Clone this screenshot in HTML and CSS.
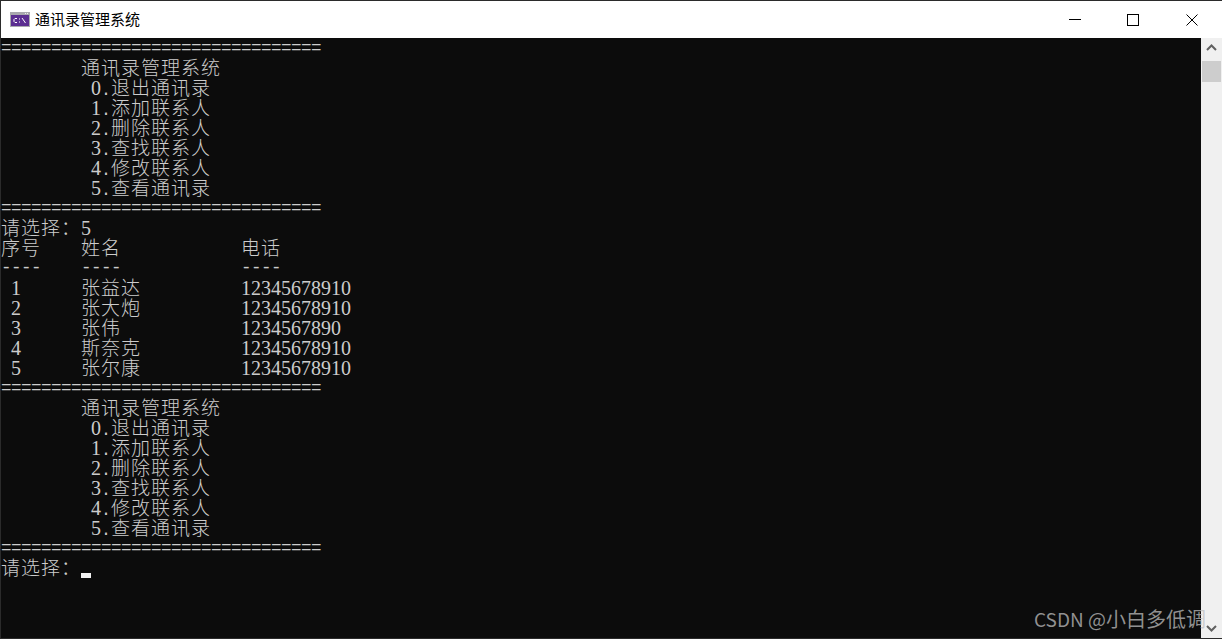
FILE: index.html
```html
<!DOCTYPE html>
<html lang="zh-CN">
<head>
<meta charset="utf-8">
<title>通讯录管理系统</title>
<link rel="stylesheet" href="styles.css">
</head>
<body>
<div class="window">
  <header class="titlebar">
    <svg class="app-icon" width="20" height="15" viewBox="0 0 20 15">
      <rect width="20" height="15" fill="#a9a9ae"/>
      <rect x="1" y="3" width="18" height="11" fill="#5b2e91"/>
      <rect x="15" y="1" width="1" height="1" fill="#eee"/><rect x="17" y="1" width="1" height="1" fill="#eee"/>
      <path d="M7 6.5H5L4 7.5V9.5L5 10.5H7" fill="none" stroke="#fff" stroke-width="1"/>
      <path d="M9 7h1M9 10h1" stroke="#fff" stroke-width="1"/>
      <path d="M12 6L15.5 11" stroke="#fff" stroke-width="1"/>
    </svg>
    <span class="title">通讯录管理系统</span>
    <div class="controls">
      <div class="ctl min"><svg width="12" height="12" viewBox="0 0 12 12"><path d="M0 5.5H12" stroke="#000" stroke-width="1"/></svg></div>
      <div class="ctl max"><svg width="12" height="12" viewBox="0 0 12 12"><rect x="0.5" y="0.5" width="11" height="11" fill="none" stroke="#000" stroke-width="1"/></svg></div>
      <div class="ctl close"><svg width="12" height="12" viewBox="0 0 12 12"><path d="M0.5 0.5L11.5 11.5M11.5 0.5L0.5 11.5" stroke="#000" stroke-width="1"/></svg></div>
    </div>
  </header>
  <main class="body">
    <div class="console">
      <div class="ln r">================================</div>
      <div class="ln">        <span class="c">通讯录管理系统</span></div>
      <div class="ln">         <span class="n">0</span>.<span class="c">退出通讯录</span></div>
      <div class="ln">         <span class="n">1</span>.<span class="c">添加联系人</span></div>
      <div class="ln">         <span class="n">2</span>.<span class="c">删除联系人</span></div>
      <div class="ln">         <span class="n">3</span>.<span class="c">查找联系人</span></div>
      <div class="ln">         <span class="n">4</span>.<span class="c">修改联系人</span></div>
      <div class="ln">         <span class="n">5</span>.<span class="c">查看通讯录</span></div>
      <div class="ln r">================================</div>
      <div class="ln"><span class="c">请选择：</span><span class="n">5</span></div>
      <div class="ln"><span class="c">序号</span>    <span class="c">姓名</span>            <span class="c">电话</span></div>
      <div class="ln r">----    ----            ----</div>
      <div class="ln"> <span class="n">1</span>      <span class="c">张益达</span>          <span class="n">12345678910</span></div>
      <div class="ln"> <span class="n">2</span>      <span class="c">张大炮</span>          <span class="n">12345678910</span></div>
      <div class="ln"> <span class="n">3</span>      <span class="c">张伟</span>            <span class="n">1234567890</span></div>
      <div class="ln"> <span class="n">4</span>      <span class="c">斯奈克</span>          <span class="n">12345678910</span></div>
      <div class="ln"> <span class="n">5</span>      <span class="c">张尔康</span>          <span class="n">12345678910</span></div>
      <div class="ln r">================================</div>
      <div class="ln">        <span class="c">通讯录管理系统</span></div>
      <div class="ln">         <span class="n">0</span>.<span class="c">退出通讯录</span></div>
      <div class="ln">         <span class="n">1</span>.<span class="c">添加联系人</span></div>
      <div class="ln">         <span class="n">2</span>.<span class="c">删除联系人</span></div>
      <div class="ln">         <span class="n">3</span>.<span class="c">查找联系人</span></div>
      <div class="ln">         <span class="n">4</span>.<span class="c">修改联系人</span></div>
      <div class="ln">         <span class="n">5</span>.<span class="c">查看通讯录</span></div>
      <div class="ln r">================================</div>
      <div class="ln"><span class="c">请选择：</span><span class="cursor"></span></div>
    </div>
    <aside class="scrollbar">
      <svg class="arrow" width="21" height="17" viewBox="0 0 21 17"><path d="M6 12L10.5 7.5L15 12" fill="none" stroke="#606060" stroke-width="2"/></svg>
      <div class="thumb"></div>
      <svg class="arrow down" width="21" height="17" viewBox="0 0 21 17"><path d="M6 5L10.5 9.5L15 5" fill="none" stroke="#606060" stroke-width="2"/></svg>
    </aside>
  </main>
  <div class="watermark">CSDN @<span class="wm-cjk">小白多低调</span></div>
</div>
</body>
</html>
```
FILE: styles.css
```css
html, body {
  margin: 0;
  padding: 0;
  background: #2b2b2b;
  overflow: hidden;
}
.window {
  position: relative;
  box-sizing: border-box;
  width: 1222px;
  height: 639px;
  padding: 1px 0 1px 1px;
  display: flex;
  flex-direction: column;
  overflow: hidden;
}
.titlebar {
  flex: 0 0 37px;
  display: flex;
  align-items: center;
  background: #fff;
  padding-left: 9px;
}
.app-icon {
  flex: none;
  margin-top: -1px;
}
.title {
  margin-left: 5px;
  margin-top: -2px;
  font: 15px/20px "Noto Sans CJK SC", sans-serif;
  color: #000;
}
.controls {
  margin-left: auto;
  padding-right: 1px;
  display: flex;
}
.ctl {
  height: 37px;
  display: flex;
  align-items: center;
  justify-content: center;
}
.ctl.min { width: 56px; }
.ctl.max { width: 60px; }
.ctl.close { width: 58px; }
.body {
  flex: 1;
  display: flex;
  min-height: 0;
}
.console {
  flex: 1;
  background: #0c0c0c;
  color: #cccccc;
  font-family: "Liberation Mono", monospace;
  font-size: 16.67px;
  overflow: hidden;
}
.ln {
  height: 20px;
  line-height: 18px;
  white-space: pre;
}
.ln.r {
  font-size: 17.5px;
  letter-spacing: -0.5px;
  line-height: 20px;
}
.c {
  font-family: "Noto Sans CJK SC", sans-serif;
  font-size: 19px;
  font-weight: 300;
  letter-spacing: 1px;
  line-height: 18px;
}
.n {
  font-family: "Liberation Serif", serif;
  font-size: 20px;
  line-height: 18px;
}
.cursor {
  display: inline-block;
  vertical-align: -3px;
  width: 10px;
  height: 5px;
  background: #f2f2f2;
}
.scrollbar {
  flex: 0 0 21px;
  background: #f0f0f0;
  display: flex;
  flex-direction: column;
  align-items: center;
}
.arrow {
  flex: none;
}
.thumb {
  flex: none;
  width: 19px;
  height: 21px;
  margin-top: 6px;
  background: #cdcdcd;
}
.arrow.down {
  margin-top: auto;
}
.watermark {
  position: absolute;
  left: 1034px;
  top: 606px;
  font: 19px/26px "Noto Sans CJK SC", sans-serif;
  color: rgba(190, 190, 190, 0.75);
  white-space: nowrap;
}
.wm-cjk {
  font-size: 20px;
}
```
